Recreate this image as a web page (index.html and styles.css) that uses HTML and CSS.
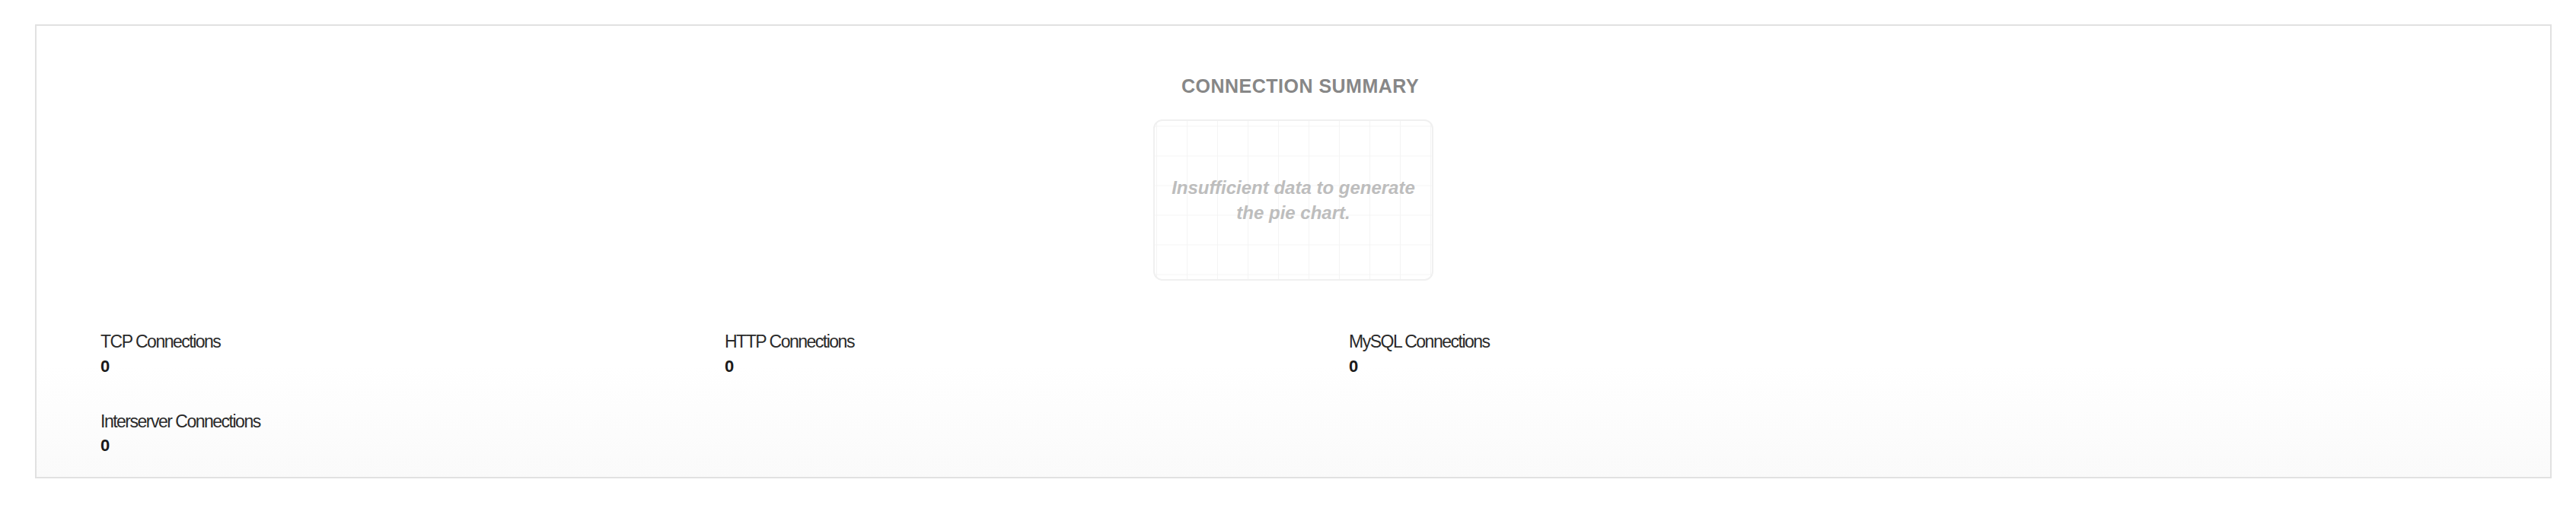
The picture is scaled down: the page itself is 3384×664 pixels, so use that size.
FILE: index.html
```html
<!DOCTYPE html>
<html lang="en">

<head>
    <meta charset="UTF-8" />
    <title>Connection Summary</title>
    <link rel="stylesheet" href="styles.css">
</head>

<body>
    <div class="panel">
        <!-- 标题 -->
        <h2 class="panel-title">CONNECTION SUMMARY</h2>

        <!-- 饼图占位 -->
        <div class="pie-empty">
            <p>Insufficient data to generate the pie chart.</p>
        </div>

        <!-- 连接数列表 -->
        <ul class="stat-list">
            <li class="stat">
                <span class="stat-label">TCP Connections</span>
                <strong class="stat-value">0</strong>
            </li>
            <li class="stat">
                <span class="stat-label">HTTP Connections</span>
                <strong class="stat-value">0</strong>
            </li>
            <li class="stat">
                <span class="stat-label">MySQL Connections</span>
                <strong class="stat-value">0</strong>
            </li>
            <li class="stat">
                <span class="stat-label">Interserver Connections</span>
                <strong class="stat-value">0</strong>
            </li>
        </ul>
    </div>
</body>

</html>
```

FILE: styles.css
```css
* {
    margin: 0;
    padding: 0;
    box-sizing: border-box;
}

ul {
    list-style: none;
}

body {
    margin: 32px 32px 34px 46px;
    background-color: #fff;
    font-family: "Liberation Sans", Arial, Helvetica, sans-serif;
}

.panel {
    padding: 64px 0 28px;
    border: 2px solid #e1e1e1;
    background: linear-gradient(to bottom, #fff 75%, #fafafa);
}

.panel-title {
    padding-left: 18px;
    color: #878787;
    font-size: 25px;
    font-weight: bold;
    letter-spacing: 0.5px;
    line-height: 30px;
    text-align: center;
}

.pie-empty {
    display: flex;
    align-items: center;
    justify-content: center;
    width: 368px;
    height: 212px;
    margin: 29px auto 0;
    padding: 0 20px;
    border: 2px solid #f0f0f0;
    border-radius: 12px;
    background-color: #fff;
    background-image:
        linear-gradient(to right, #f4f4f4 1px, transparent 1px),
        linear-gradient(to bottom, #f4f4f4 1px, transparent 1px);
    background-size: 40px 39px;
    background-position: center;
}

.pie-empty p {
    color: #bdbdbd;
    font-size: 24px;
    font-weight: bold;
    font-style: italic;
    line-height: 33px;
    text-align: center;
}

.stat-list {
    display: flex;
    flex-wrap: wrap;
    row-gap: 46px;
    margin-top: 67px;
    padding: 0 84px;
}

.stat {
    display: flex;
    flex-direction: column;
    width: 820px;
}

.stat-label {
    color: #2a2a2a;
    font-size: 23px;
    letter-spacing: -1.5px;
    line-height: 27.6px;
}

.stat-value {
    margin-top: 5px;
    color: #1a1a1a;
    font-size: 22px;
    line-height: 26px;
}
```
